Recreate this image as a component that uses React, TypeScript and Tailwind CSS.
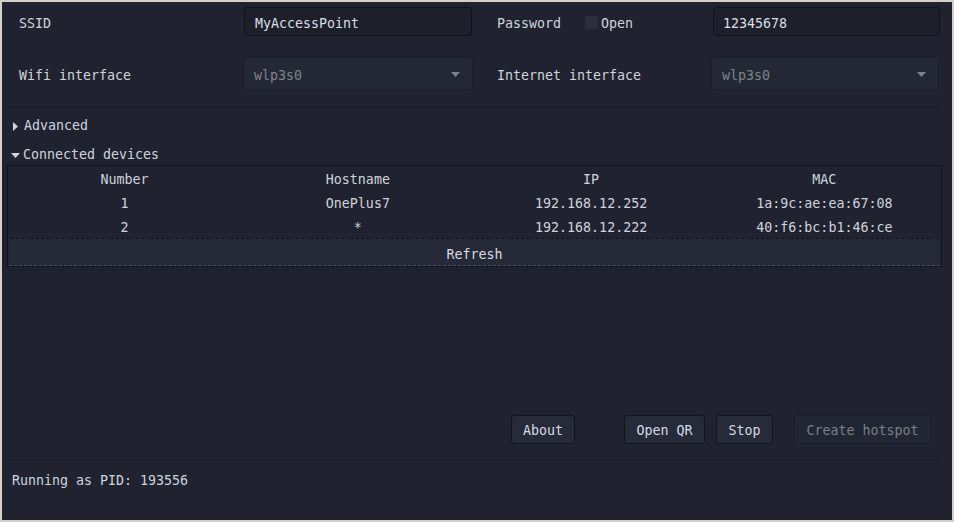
import React from "react";

const mono = { fontFamily: '"DejaVu Sans Mono", "Liberation Mono", monospace' };

const devices = [
  { number: "1", hostname: "OnePlus7", ip: "192.168.12.252", mac: "1a:9c:ae:ea:67:08" },
  { number: "2", hostname: "*", ip: "192.168.12.222", mac: "40:f6:bc:b1:46:ce" },
];

const Combo = ({ value, width }: { value: string; width: string }) => {
  return (
    <div
      className={`${width} h-[33px] shrink-0 flex items-center justify-between rounded-[3px] border border-[#1a1d27] bg-[#242835] pl-[10px] pr-[12px] text-[#7f848e]`}
    >
      <span className="pt-[4px]">{value}</span>
      <svg width="9" height="5" viewBox="0 0 9 5" className="mt-[1px]">
        <polygon points="0,0 9,0 4.5,5" fill="#7c808a" />
      </svg>
    </div>
  );
};

const Button = ({ label, width, disabled }: { label: string; width: string; disabled?: boolean }) => {
  return (
    <button
      className={`${width} h-[29px] pt-[2px] rounded-[3px] border flex items-center justify-center ${
        disabled
          ? "border-[#1b1e28] bg-[#222633] text-[#7a7f89]"
          : "border-[#12141b] bg-[#272b39] text-[#d6dae2]"
      }`}
    >
      {label}
    </button>
  );
};

export default function App() {
  return (
    <div
      className="w-[954px] h-[522px] border-2 border-[#d4d0c8] bg-[#20232f] text-[13.3px] text-[#cfd3db] flex flex-col"
      style={mono}
    >
      {/* row 1 */}
      <div className="flex items-center mt-[5px] h-[29px]">
        <div className="w-[242px] shrink-0 pl-[17px] pt-[4px]">SSID</div>
        <div className="w-[228px] shrink-0 h-[29px] pt-[4px] rounded-[3px] border border-[#10121a] bg-[#1d202b] flex items-center pl-[10px] text-[#dadee6]">
          MyAccessPoint
        </div>
        <div className="ml-[25px] w-[216px] shrink-0 flex items-center">
          <span className="pt-[4px]">Password</span>
          <span className="ml-[24px] mt-[1px] w-[13px] h-[13px] rounded-[2px] bg-[#2a2e3b]"></span>
          <span className="ml-[3px] pt-[4px]">Open</span>
        </div>
        <div className="w-[227px] shrink-0 h-[29px] pt-[4px] rounded-[3px] border border-[#10121a] bg-[#1d202b] flex items-center pl-[9px] text-[#dadee6]">
          12345678
        </div>
      </div>

      {/* row 2 */}
      <div className="flex items-center mt-[21px] h-[33px]">
        <div className="w-[241px] shrink-0 pl-[17px] pt-[4px]">Wifi interface</div>
        <Combo value="wlp3s0" width="w-[230px]" />
        <div className="ml-[24px] w-[214px] shrink-0 pt-[4px]">Internet interface</div>
        <Combo value="wlp3s0" width="w-[228px]" />
      </div>

      <div className="mt-[16px] ml-[6px] w-[934px] h-px bg-[#191c25]"></div>

      {/* collapsing headers */}
      <div className="h-[28px] mt-[3px] pt-[4px] flex items-center pl-[11px]">
        <svg width="5" height="9" viewBox="0 0 5 9" className="mr-[6px]">
          <polygon points="0,0 5,4.5 0,9" fill="#cfd3db" />
        </svg>
        <span>Advanced</span>
      </div>
      <div className="h-[27px] pt-[7px] flex items-center pl-[9px]">
        <svg width="9" height="5" viewBox="0 0 9 5" className="mr-[3px]">
          <polygon points="0,0 9,0 4.5,5" fill="#cfd3db" />
        </svg>
        <span>Connected devices</span>
      </div>

      {/* devices table */}
      <div className="ml-[5px] w-[935px] border border-[#12141b] flex flex-col">
        <div className="grid grid-cols-4 h-[24px] pt-[4px] items-center text-center">
          <div>Number</div>
          <div>Hostname</div>
          <div>IP</div>
          <div>MAC</div>
        </div>
        {devices.map((d) => (
          <div key={d.number} className="grid grid-cols-4 h-[24px] pt-[4px] items-center text-center">
            <div>{d.number}</div>
            <div>{d.hostname}</div>
            <div>{d.ip}</div>
            <div>{d.mac}</div>
          </div>
        ))}
        <div className="h-[28px] pt-[5px] ml-px mr-px rounded-t-[2px] border-t border-[#12141b] border-b border-b-[#4a4f5c] border-dashed bg-[#262a38] flex items-center justify-center text-[#d6dae2]">
          Refresh
        </div>
      </div>

      {/* buttons */}
      <div className="mt-[148px] flex items-center h-[29px]">
        <div className="ml-[509px]">
          <Button label="About" width="w-[64px]" />
        </div>
        <div className="ml-[49px]">
          <Button label="Open QR" width="w-[81px]" />
        </div>
        <div className="ml-[11px]">
          <Button label="Stop" width="w-[57px]" />
        </div>
        <div className="ml-[21px]">
          <Button label="Create hotspot" width="w-[137px]" disabled />
        </div>
      </div>

      <div className="mt-[15px] ml-[6px] w-[934px] h-px bg-[#191c25]"></div>

      <div className="h-[40px] pt-[2px] flex items-center pl-[10px]">Running as PID: 193556</div>
    </div>
  );
}
